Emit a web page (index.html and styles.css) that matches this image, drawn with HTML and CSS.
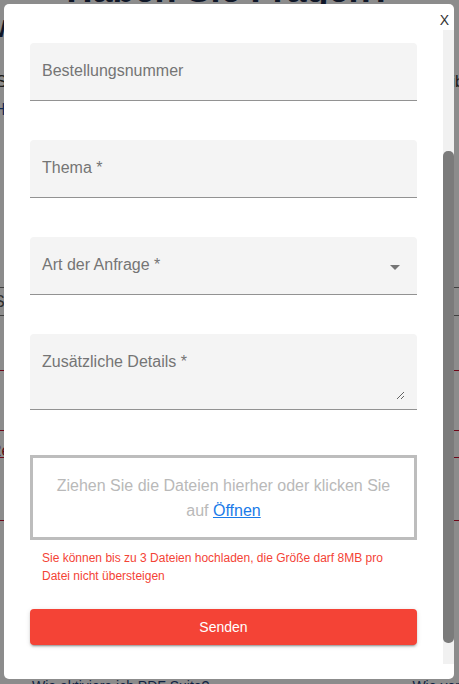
FILE: index.html
```html
<!DOCTYPE html>
<html lang="de">
<head>
<meta charset="utf-8">
<title>Haben Sie Fragen?</title>
<link rel="stylesheet" href="styles.css">
</head>
<body>
	<div class="page">
		<h1 class="hero">Haben Sie Fragen?</h1>
		<h2 class="sub">Wir helfen Ihnen gern bei allen <span class="red">Themen</span></h2>
		<p class="intro">Schauen Sie sich unsere häufig gestellten Fragen an oder schreiben Sie uns.</p>
		<p class="intro link">Hilfe-Center öffnen</p>
		<div class="rule"><span>Service und Support</span></div>
		<ul class="faq">
			<li></li>
			<li></li>
			<li>Rechnungen</li>
			<li></li>
		</ul>
		<div class="links">
			<a>Wie aktiviere ich PDF Suite?</a>
			<a>Wie verlängere ich?</a>
		</div>
	</div>

	<div class="overlay">
		<div class="modal">
			<div class="modal-head"><button class="close">X</button></div>
			<div class="modal-body">
				<div class="scroll" id="scroll">
					<h2 class="title">Kontaktieren Sie uns</h2>
					<div class="field"><input type="text" placeholder="E-Mail *"></div>
					<div class="field"><input type="text" placeholder="Bestellungsnummer"></div>
					<div class="field"><input type="text" placeholder="Thema *"></div>
					<div class="field select">
						<span>Art der Anfrage *</span>
						<svg width="24" height="24" viewBox="0 0 24 24"><path d="M7 10l5 5 5-5z" fill="#757575"/></svg>
					</div>
					<div class="field area"><textarea placeholder="Zusätzliche Details *"></textarea></div>
					<div class="drop">Ziehen Sie die Dateien hierher oder klicken Sie auf <a href="#">Öffnen</a></div>
					<p class="note">Sie können bis zu 3 Dateien hochladen, die Größe darf 8MB pro Datei nicht übersteigen</p>
					<button class="send">Senden</button>
				</div>
				<div class="bar"><div class="thumb"></div></div>
			</div>
		</div>
	</div>
<script>
	document.getElementById("scroll").scrollTop=156;
</script>
</body>
</html>
```
FILE: styles.css
```css
*{margin:0;padding:0;box-sizing:border-box;}
html,body{height:100%;overflow:hidden;}
body{font-family:"Liberation Sans",Arial,sans-serif;background:#fff;color:#222;}

/* page behind the dialog */
.page{margin-top:-30px;overflow:hidden;height:714px;}
.hero{font-size:36px;line-height:40px;text-align:center;color:#1c2b4a;}
.sub{font-size:24px;line-height:30px;margin-top:4px;white-space:nowrap;margin-left:-6px;color:#1c2b4a;}
.sub .red{color:#a3122a;}
.intro{font-size:16px;line-height:28px;margin-top:24px;color:#333;white-space:nowrap;margin-left:-4px;}
.intro.link{margin-top:0;color:#1d4e9e;margin-left:-6px;}
.rule{margin-top:163px;border-top:1px solid #777;border-bottom:1px solid #777;height:29px;line-height:27px;font-size:16px;margin-left:-6px;color:#555;}
.faq{list-style:none;}
.faq li{border-bottom:1px solid #c8102e;height:60px;font-size:16px;line-height:40px;color:#a3122a;margin-left:-10px;}
.faq li:nth-child(1){height:55px;}
.faq li:nth-child(3){height:27px;}
.faq li:nth-child(4){height:63px;line-height:24px;}
.links{display:flex;gap:203px;padding-left:32px;margin-top:157px;font-size:14px;color:#1d3f7a;white-space:nowrap;}

/* dialog */
.overlay{position:fixed;top:0;left:0;right:0;bottom:0;background:rgba(0,0,0,0.45);}
.modal{position:fixed;top:4px;left:4px;width:450px;height:675px;background:#fff;border-radius:5px;display:flex;flex-direction:column;padding-bottom:15px;}
.modal-head{height:26px;display:flex;justify-content:flex-end;padding:5px 5px 0 0;}
.close{border:0;background:none;font-family:"Liberation Sans",Arial,sans-serif;font-size:14px;line-height:14px;color:#333;cursor:pointer;}
.modal-body{flex:1;display:flex;min-height:0;}
.scroll{flex:1;overflow:hidden;padding:24px 26px 46px;}
.bar{width:11px;background:#f1f1f1;padding-top:121px;}
.thumb{height:492px;background:#7b7b7b;border-radius:5px;}

.title{font-size:20px;line-height:28px;font-weight:normal;margin-bottom:20px;color:#333;}
.field{background:#f4f4f4;border-radius:4px 4px 0 0;border-bottom:1px solid #929292;padding:20px 12px 21px;margin-bottom:39px;}
.field input{display:block;width:100%;height:16px;border:0;background:none;outline:none;font-family:"Liberation Sans",Arial,sans-serif;font-size:16px;line-height:16px;color:#222;}
.field input::placeholder,.field textarea::placeholder{color:#757575;opacity:1;}
.select{display:flex;align-items:flex-start;padding-right:10px;height:58px;}
.select span{flex:1;font-size:16px;line-height:16px;color:#757575;}
.select svg{margin-top:-2px;}
.area{padding:20px 12px 9px;margin-bottom:45px;}
.area textarea{display:block;width:100%;height:46px;border:0;background:none;outline:none;resize:vertical;font-family:"Liberation Sans",Arial,sans-serif;font-size:16px;line-height:16px;color:#222;}

.drop{border:3px solid #bdbdbd;padding:15px 20px 14px;text-align:center;font-size:16px;line-height:25px;color:#b9b9b9;}
.drop a{color:#1a7ae8;}
.note{margin-top:9px;padding:0 12px;font-size:12px;line-height:18px;color:#f44336;}
.send{display:block;width:100%;height:36px;margin-top:24px;border:0;border-radius:4px;background:#f44336;color:#fff;font-family:"Liberation Sans",Arial,sans-serif;font-size:14px;cursor:pointer;box-shadow:0 3px 1px -2px rgba(0,0,0,0.2),0 2px 2px 0 rgba(0,0,0,0.14),0 1px 5px 0 rgba(0,0,0,0.12);}
```
